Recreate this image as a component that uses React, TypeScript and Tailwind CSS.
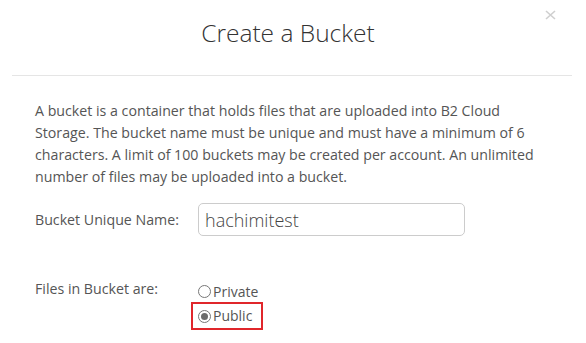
import React from "react";

export default function App() {
  return (
    <div
      className="relative w-[586px] h-[343px] bg-white overflow-hidden text-[#555]"
      style={{ fontFamily: '"Open Sans", "Liberation Sans", sans-serif' }}
    >
      {/* close */}
      <div className="absolute left-[545px] top-[10px] w-[11px] h-[10px]">
        <svg width="11" height="10" viewBox="0 0 11 10">
          <path d="M1 1 L10 9 M10 1 L1 9" stroke="#cfcfcf" strokeWidth="1.6" fill="none" />
        </svg>
      </div>

      {/* header */}
      <div className="h-[75px] flex items-start justify-center pt-[15px] pr-[10px]">
        <h1 className="text-[24.5px] font-light text-[#333] leading-[36px]">Create a Bucket</h1>
      </div>
      <div className="ml-[12px] w-[560px] h-[1px] bg-[#e5e5e5]" />

      {/* body */}
      <div className="pl-[35px] pr-[38px] pt-[24px]">
        <p className="text-[14.2px] leading-[22px] text-[#555]">
          A bucket is a container that holds files that are uploaded into B2 Cloud Storage. The bucket name must be
          unique and must have a minimum of 6 characters. A limit of 100 buckets may be created per account. An
          unlimited number of files may be uploaded into a bucket.
        </p>

        <div className="mt-[15px] flex items-center">
          <label className="w-[163px] text-[14.2px] leading-[20px] text-[#555]">Bucket Unique Name:</label>
          <div className="w-[267px] h-[33px] border border-[#cccccc] rounded-[5px] flex items-center pl-[6px]">
            <span className="text-[18px] font-light text-[#444] leading-[24px]">hachimitest</span>
          </div>
        </div>

        <div className="mt-[43px] flex items-start">
          <label className="w-[156px] text-[14.2px] leading-[20px] text-[#555]">Files in Bucket are:</label>
          <div className="flex flex-col mt-[2px]">
            <div className="h-[21px] flex items-center pl-[7px]">
              <span className="w-[13px] h-[13px] rounded-full border border-[#777] bg-white" />
              <span className="ml-[2px] text-[14px] leading-[20px] text-[#555]">Private</span>
            </div>
            <div className="w-[72px] h-[28px] border-2 border-[#e0262b] flex items-center pl-[5px]">
              <span className="w-[13px] h-[13px] rounded-full border border-[#777] bg-white flex items-center justify-center">
                <span className="w-[7px] h-[7px] rounded-full bg-[#6b6b6b]" />
              </span>
              <span className="ml-[2px] text-[14px] leading-[20px] text-[#555]">Public</span>
            </div>
          </div>
        </div>
      </div>
    </div>
  );
}
